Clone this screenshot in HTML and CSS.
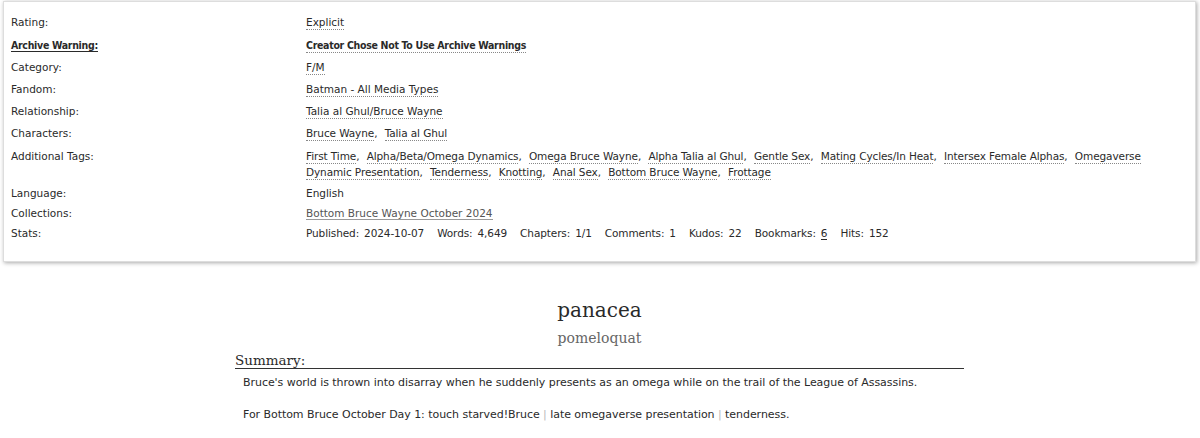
FILE: index.html
```html
<!DOCTYPE html>
<html lang="en">
<head>
    <meta charset="UTF-8">
    <title>panacea - pomeloquat</title>
    <link rel="stylesheet" href="styles.css">
</head>

<body>

<div class="wrapper">
    <!-- Work metadata -->
    <dl class="work meta">
        <dt>Rating:</dt>
        <dd class="rating"><ul class="tags"><li><a class="tag">Explicit</a></li></ul></dd>

        <dt class="warning"><a class="help">Archive Warning:</a></dt>
        <dd><ul class="tags"><li><a class="tag bold">Creator Chose Not To Use Archive Warnings</a></li></ul></dd>

        <dt>Category:</dt>
        <dd><ul class="tags"><li><a class="tag">F/M</a></li></ul></dd>

        <dt>Fandom:</dt>
        <dd><ul class="tags"><li><a class="tag">Batman - All Media Types</a></li></ul></dd>

        <dt>Relationship:</dt>
        <dd><ul class="tags"><li><a class="tag">Talia al Ghul/Bruce Wayne</a></li></ul></dd>

        <dt>Characters:</dt>
        <dd class="characters"><ul class="tags commas"><li><a class="tag">Bruce Wayne</a>,</li> <li><a class="tag">Talia al Ghul</a></li></ul></dd>

        <dt>Additional Tags:</dt>
        <dd class="freeform"><ul class="tags commas"><li><a class="tag">First Time</a>,</li> <li><a class="tag">Alpha/Beta/Omega Dynamics</a>,</li> <li><a class="tag">Omega Bruce Wayne</a>,</li> <li><a class="tag">Alpha Talia al Ghul</a>,</li> <li><a class="tag">Gentle Sex</a>,</li> <li><a class="tag">Mating Cycles/In Heat</a>,</li> <li><a class="tag">Intersex Female Alphas</a>,</li> <li><a class="tag">Omegaverse<br>Dynamic Presentation</a>,</li> <li><a class="tag">Tenderness</a>,</li> <li><a class="tag">Knotting</a>,</li> <li><a class="tag">Anal Sex</a>,</li> <li><a class="tag">Bottom Bruce Wayne</a>,</li> <li><a class="tag">Frottage</a></li></ul></dd>

        <dt>Language:</dt>
        <dd class="plain">English</dd>

        <dt>Collections:</dt>
        <dd class="plain"><a class="collection">Bottom Bruce Wayne October 2024</a></dd>

        <dt>Stats:</dt>
        <dd class="plain stats"><span class="label">Published:</span><span class="value">2024-10-07</span><span class="label">Words:</span><span class="value">4,649</span><span class="label">Chapters:</span><span class="value">1/1</span><span class="label">Comments:</span><span class="value">1</span><span class="label">Kudos:</span><span class="value">22</span><span class="label">Bookmarks:</span><a class="value count">6</a><span class="label">Hits:</span><span class="value">152</span></dd>
    </dl>

    <!-- Title, author and summary -->
    <div class="preface">
        <h2 class="title">panacea</h2>
        <h3 class="byline">pomeloquat</h3>

        <div class="summary">
            <h3 class="heading">Summary:</h3>
            <blockquote class="userstuff">
                <p>Bruce's world is thrown into disarray when he suddenly presents as an omega while on the trail of the League of Assassins.</p>
                <p>For Bottom Bruce October Day 1: touch starved!Bruce <span class="pipe">|</span> late omegaverse presentation <span class="pipe">|</span> tenderness.</p>
            </blockquote>
        </div>
    </div>
</div>

</body>
</html>
```

FILE: styles.css
```css
body {
    font-family: "DejaVu Sans", Verdana, sans-serif;
    font-size: 11px;
    color: #2a2a2a;
    margin: 0;
    padding: 0;
    background-color: #fff;
}

.wrapper {
    padding: 1px 4px 0 3px;
}

/* metadata box */
.work.meta {
    display: grid;
    grid-template-columns: 295px 1fr;
    margin: 0;
    padding: 12px 7px 20px;
    border: 1px solid #ddd;
    box-shadow: 1px 1px 4px #aaa;
    font-size: 10.5px;
    line-height: 16px;
}

.meta dt {
    margin: 0;
}

.meta dd {
    margin: 0 0 6px;
}

.meta dd.rating {
    margin-bottom: 7px;
}

.meta dd.characters {
    margin-bottom: 7px;
}

.meta dd.freeform {
    margin-bottom: 5px;
}

.meta dd.plain {
    margin-bottom: 4px;
}

.meta dd.stats {
    margin-bottom: 0;
    letter-spacing: -0.1px;
}

.meta dt.warning a {
    font-family: "DejaVu Sans Condensed", "DejaVu Sans", sans-serif;
    font-stretch: condensed;
    font-weight: bold;
    letter-spacing: -0.3px;
    border-bottom: 1px solid #2a2a2a;
}

.tags {
    list-style: none;
    margin: 0;
    padding: 0;
    white-space: nowrap;
}

.tags li {
    display: inline;
}

.commas {
    letter-spacing: -0.1px;
}

.commas li + li {
    margin-left: 4px;
}

.tag {
    border-bottom: 1px dotted #888;
    padding-bottom: 1px;
}

.tag.bold {
    font-family: "DejaVu Sans Condensed", "DejaVu Sans", sans-serif;
    font-stretch: condensed;
    font-weight: bold;
    letter-spacing: -0.3px;
}

.collection {
    color: #555;
    border-bottom: 1px solid #999;
}

.stats .label {
    margin-right: 5px;
}

.stats .value {
    margin-right: 13px;
}

.stats .count {
    border-bottom: 1px solid #2a2a2a;
}

/* preface */
.preface {
    width: 729px;
    margin: 0 auto;
}

.title {
    font-family: "DejaVu Serif", Georgia, serif;
    font-weight: normal;
    font-size: 20px;
    line-height: 24px;
    text-align: center;
    margin: 36px 0 0;
}

.byline {
    font-family: "DejaVu Serif", Georgia, serif;
    font-weight: normal;
    font-size: 14px;
    line-height: 18px;
    color: #666;
    text-align: center;
    margin: 7px 0 0;
}

.summary .heading {
    font-family: "DejaVu Serif", Georgia, serif;
    font-weight: normal;
    font-size: 13.5px;
    line-height: 16px;
    margin: 5px 0 0;
    border-bottom: 1px solid #333;
}

.userstuff {
    margin: 0;
    padding: 0 8px;
}

.userstuff p {
    margin: 5px 0 14px;
    line-height: 18px;
    letter-spacing: -0.05px;
}

.pipe {
    color: #bbb;
}
```
